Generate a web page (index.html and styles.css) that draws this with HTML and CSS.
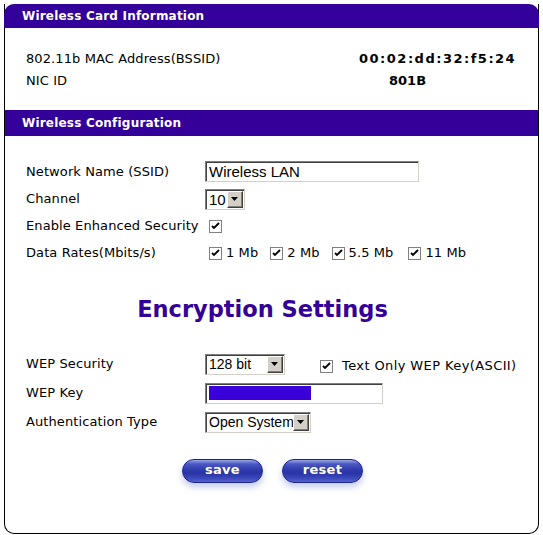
FILE: index.html
```html
<!DOCTYPE html>
<html>
<head>
<meta charset="utf-8">
<link rel="stylesheet" href="styles.css">
</head>
<body>
<div class="frame">
  <div class="head head-top">Wireless Card Information</div>
  <div class="info">
    <div class="info-row"><span class="info-lbl">802.11b MAC Address(BSSID)</span><span class="val">00:02:dd:32:f5:24</span></div>
    <div class="info-row"><span class="info-lbl">NIC ID</span><span class="val val-nic">801B</span></div>
  </div>
  <div class="head head-cfg">Wireless Configuration</div>
  <div class="config">
    <div class="row row-first"><span class="lbl">Network Name (SSID)</span><div class="field ssid">Wireless LAN</div></div>
    <div class="row"><span class="lbl">Channel</span><div class="select sel-channel"><span class="sel-text">10</span><span class="sel-btn"><svg width="7" height="4" viewBox="0 0 7 4"><path d="M0 0h7L3.5 4z" fill="#000"/></svg></span></div></div>
    <div class="row"><span class="lbl">Enable Enhanced Security</span><span class="cb"><svg width="13" height="13" viewBox="0 0 13 13"><rect x="0.5" y="0.5" width="12" height="12" fill="#fff" stroke="#808080"/><path d="M3 6l2 2 5-5" fill="none" stroke="#000" stroke-width="1.8"/></svg></span></div>
    <div class="row"><span class="lbl">Data Rates(Mbits/s)</span>
      <div class="rates">
        <span class="rate"><span class="cb"><svg width="13" height="13" viewBox="0 0 13 13"><rect x="0.5" y="0.5" width="12" height="12" fill="#fff" stroke="#808080"/><path d="M3 6l2 2 5-5" fill="none" stroke="#000" stroke-width="1.8"/></svg></span>1 Mb</span>
        <span class="rate"><span class="cb"><svg width="13" height="13" viewBox="0 0 13 13"><rect x="0.5" y="0.5" width="12" height="12" fill="#fff" stroke="#808080"/><path d="M3 6l2 2 5-5" fill="none" stroke="#000" stroke-width="1.8"/></svg></span>2 Mb</span>
        <span class="rate"><span class="cb"><svg width="13" height="13" viewBox="0 0 13 13"><rect x="0.5" y="0.5" width="12" height="12" fill="#fff" stroke="#808080"/><path d="M3 6l2 2 5-5" fill="none" stroke="#000" stroke-width="1.8"/></svg></span>5.5 Mb</span>
        <span class="rate"><span class="cb"><svg width="13" height="13" viewBox="0 0 13 13"><rect x="0.5" y="0.5" width="12" height="12" fill="#fff" stroke="#808080"/><path d="M3 6l2 2 5-5" fill="none" stroke="#000" stroke-width="1.8"/></svg></span>11 Mb</span>
      </div>
    </div>
  </div>
  <h2 class="enc-title">Encryption Settings</h2>
  <div class="enc">
    <div class="row"><span class="lbl">WEP Security</span><div class="select sel-wep"><span class="sel-text">128 bit</span><span class="sel-btn"><svg width="7" height="4" viewBox="0 0 7 4"><path d="M0 0h7L3.5 4z" fill="#000"/></svg></span></div>
      <span class="ascii"><span class="cb"><svg width="13" height="13" viewBox="0 0 13 13"><rect x="0.5" y="0.5" width="12" height="12" fill="#fff" stroke="#808080"/><path d="M3 6l2 2 5-5" fill="none" stroke="#000" stroke-width="1.8"/></svg></span>Text Only WEP Key(ASCII)</span>
    </div>
    <div class="row"><span class="lbl">WEP Key</span><div class="field wepkey"><span class="key-bar"></span></div></div>
    <div class="row"><span class="lbl">Authentication Type</span><div class="select sel-auth"><span class="sel-text">Open System</span><span class="sel-btn"><svg width="7" height="4" viewBox="0 0 7 4"><path d="M0 0h7L3.5 4z" fill="#000"/></svg></span></div></div>
  </div>
  <div class="buttons">
    <button class="pill">save</button>
    <button class="pill">reset</button>
  </div>
</div>
</body>
</html>
```
FILE: styles.css
```css
html, body {
  margin: 0;
  background: #fff;
}
body {
  padding: 4px;
  font-family: "DejaVu Sans", Verdana, sans-serif;
  font-size: 13px;
  color: #000;
}
.frame {
  width: 533px;
  border: 1px solid #000;
  border-top: 0;
  border-radius: 0 0 10px 10px;
}
.head {
  background: #330099;
  color: #fff;
  font-weight: bold;
  font-size: 12px;
  letter-spacing: 0.2px;
  padding-left: 17px;
}
.head-top {
  height: 24px;
  line-height: 24px;
  margin: 0 -1px;
  padding-left: 18px;
  border-radius: 10px 10px 0 0;
}
.head-cfg {
  height: 26px;
  line-height: 26px;
}
.info {
  padding: 20px 0 18px 21px;
}
.info-row {
  display: flex;
  height: 22px;
  line-height: 22px;
}
.info-lbl {
  width: 333px;
  letter-spacing: 0.1px;
}
.val {
  font-weight: bold;
  letter-spacing: 1.5px;
}
.val-nic {
  padding-left: 30px;
  letter-spacing: 0;
}
.config {
  padding: 24px 0 0 21px;
  display: flex;
  flex-direction: column;
  gap: 5px;
}
.row {
  display: flex;
  align-items: center;
  height: 22px;
  line-height: 22px;
}
.row-first {
  height: 23px;
}
.lbl {
  width: 179px;
  flex: none;
  letter-spacing: 0.1px;
  white-space: nowrap;
}
.field, .select {
  box-sizing: border-box;
  height: 21px;
  border-top: 1px solid #808080;
  border-left: 1px solid #808080;
  border-right: 1px solid #d4d0c8;
  border-bottom: 1px solid #d4d0c8;
  box-shadow: inset 1px 1px 0 #404040;
  background: #fff;
  font-family: "Liberation Sans", Arial, sans-serif;
  font-size: 14px;
  line-height: 19px;
  white-space: nowrap;
}
.ssid {
  width: 214px;
  padding-left: 3px;
  font-size: 15px;
}
.select {
  display: flex;
  align-items: stretch;
  padding: 1px 1px 1px 2px;
}
.sel-text {
  flex: 1;
  line-height: 17px;
  padding-left: 1px;
  overflow: hidden;
}
.sel-channel .sel-text {
  font-size: 15px;
}
.sel-btn {
  box-sizing: border-box;
  flex: none;
  width: 16px;
  background: #d4d0c8;
  border-top: 1px solid #fff;
  border-left: 1px solid #fff;
  border-right: 1px solid #404040;
  border-bottom: 1px solid #404040;
  box-shadow: inset -1px -1px 0 #808080;
  display: flex;
  align-items: center;
  justify-content: center;
}
.sel-btn svg {
  display: block;
  margin: 0 1px 1px 0;
}
.sel-channel {
  width: 40px;
}
.sel-wep {
  width: 80px;
}
.sel-auth {
  width: 106px;
}
.cb {
  display: inline-flex;
  margin: 0 4px 0 4px;
}
.cb svg {
  display: block;
}
.rates {
  display: flex;
  gap: 8px;
}
.rate {
  display: inline-flex;
  align-items: center;
  letter-spacing: 0.1px;
}
.rate:nth-child(3) {
  margin-right: 3px;
}
.enc-title {
  margin: 30px 0 0;
  height: 30px;
  line-height: 30px;
  text-align: center;
  font-size: 22.5px;
  font-weight: bold;
  color: #330099;
  padding-right: 18px;
}
.enc {
  margin-top: 29px;
  padding-left: 21px;
  display: flex;
  flex-direction: column;
  gap: 7px;
}
.ascii {
  display: inline-flex;
  align-items: center;
  margin-left: 31px;
  padding-top: 4px;
  letter-spacing: 0.4px;
}
.ascii .cb {
  margin-right: 9px;
}
.wepkey {
  width: 178px;
  padding: 2px 3px;
}
.key-bar {
  display: block;
  width: 102px;
  height: 14px;
  background: #3a00dc;
}
.buttons {
  display: flex;
  justify-content: center;
  gap: 19px;
  padding: 26px 0 50px 2px;
}
.pill {
  width: 81px;
  height: 24px;
  border: 1px solid #1c2290;
  border-radius: 12px;
  background: linear-gradient(to bottom, #9aa6e6 0%, #4b58c4 18%, #2f3aac 45%, #2a34a6 60%, #3d4bbd 85%, #5564cc 100%);
  box-shadow: 0 4px 6px rgba(90, 110, 210, 0.35);
  color: #fff;
  font-family: "DejaVu Sans", Verdana, sans-serif;
  font-weight: bold;
  font-size: 13px;
  line-height: 20px;
  padding: 0 0 2px;
  letter-spacing: 0.3px;
}
```
